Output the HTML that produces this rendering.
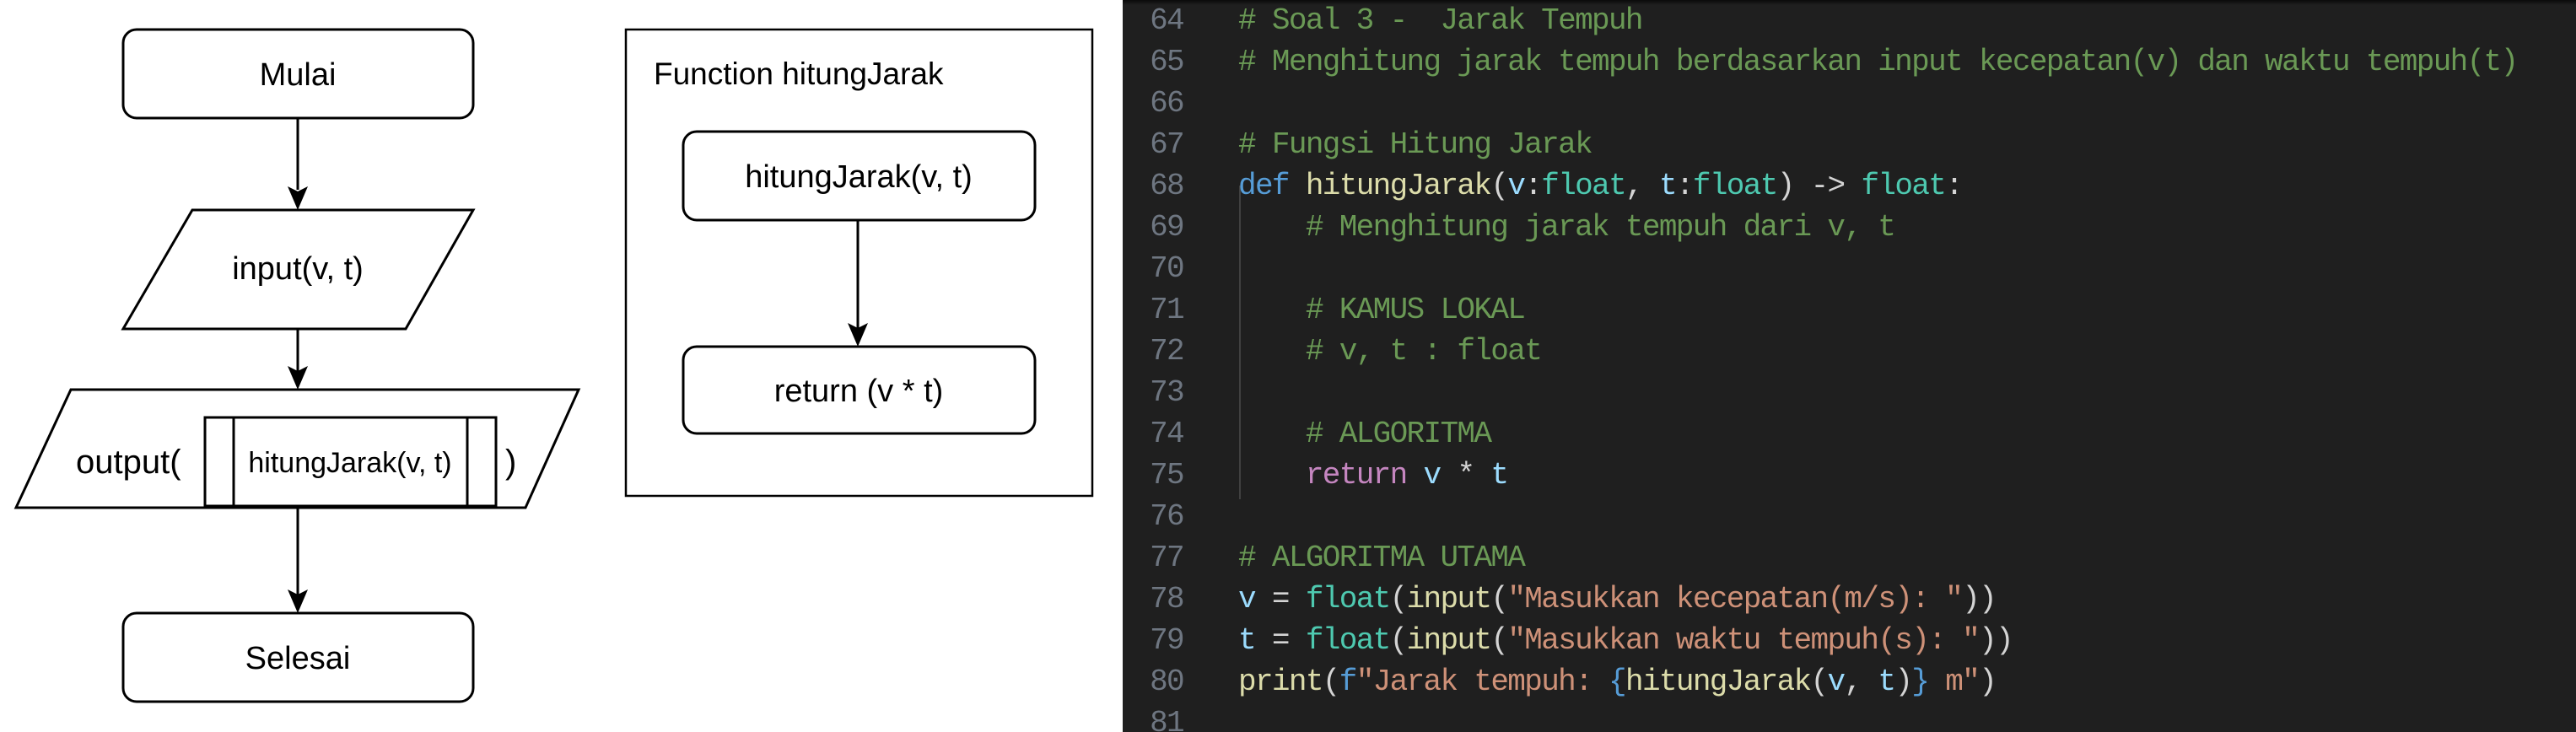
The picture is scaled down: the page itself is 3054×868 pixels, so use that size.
<!DOCTYPE html>
<html><head><meta charset="utf-8"><style>
html,body{margin:0;padding:0;width:3054px;height:868px;overflow:hidden;background:#fff}
#ed{position:absolute;left:1331px;top:0;width:1723px;height:868px;background:#1f1f1f;overflow:hidden}
#shadow{position:absolute;left:0;top:0;width:100%;height:6px;background:linear-gradient(#0a0a0a,#1f1f1f)}
.ln{position:absolute;left:0;width:72px;text-align:right;color:#6e7681;font-family:"Liberation Mono",monospace;font-size:36px;letter-spacing:-1.65px;height:49px;line-height:49px}
.cd{position:absolute;left:137px;white-space:pre;font-family:"Liberation Mono",monospace;font-size:36px;letter-spacing:-1.65px;height:49px;line-height:49px;color:#d4d4d4}
.c{color:#6a9955}.k{color:#569cd6}.f{color:#dcdcaa}.p{color:#9cdcfe}.t{color:#4ec9b0}.r{color:#c586c0}.s{color:#ce9178}
#guide{position:absolute;left:138px;top:220px;width:2px;height:372px;background:#404040}
</style></head><body>
<svg width="1331" height="868" style="position:absolute;left:0;top:0" font-family="Liberation Sans, Arial, sans-serif">
<g fill="none" stroke="#000" stroke-width="3">
<rect x="146" y="35" width="415" height="105" rx="16"/>
<polygon points="228,249 561,249 481,390 146,390"/>
<polygon points="84,462 686,462 623,602 19,602"/>
<rect x="243" y="495" width="345" height="105"/>
<line x1="277" y1="495" x2="277" y2="600"/>
<line x1="554" y1="495" x2="554" y2="600"/>
<rect x="146" y="727" width="415" height="105" rx="16"/>
<rect x="742" y="35" width="553" height="553" stroke-width="2.5"/>
<rect x="810" y="156" width="417" height="105" rx="16"/>
<rect x="810" y="411" width="417" height="103" rx="16"/>
<line x1="353" y1="140" x2="353" y2="225"/>
<line x1="353" y1="390" x2="353" y2="440"/>
<line x1="353" y1="602" x2="353" y2="705"/>
<line x1="1017" y1="261" x2="1017" y2="390"/>
</g>
<g fill="#000">
<polygon points="341,221 353,249 365,221 353,227"/>
<polygon points="341,434 353,462 365,434 353,440"/>
<polygon points="341,699 353,727 365,699 353,705"/>
<polygon points="1005,383 1017,411 1029,383 1017,389"/>
</g>
<g font-size="38" fill="#000" text-anchor="middle">
<text x="353" y="101">Mulai</text>
<text x="353" y="331">input(v, t)</text>
<text x="353" y="793">Selesai</text>
<text x="1018" y="222">hitungJarak(v, t)</text>
<text x="1018" y="476">return (v * t)</text>
</g>
<text x="775" y="100" font-size="37">Function hitungJarak</text>
<text x="90" y="561" font-size="40">output(</text>
<text x="599" y="561" font-size="40">)</text>
<text x="415" y="560" font-size="34" text-anchor="middle">hitungJarak(v, t)</text>
</svg>
<div id="ed"><div id="shadow"></div><div id="guide"></div>
<div class="ln" style="top:0px">64</div><div class="cd c" style="top:0px"># Soal 3 -  Jarak Tempuh</div>
<div class="ln" style="top:49px">65</div><div class="cd c" style="top:49px"># Menghitung jarak tempuh berdasarkan input kecepatan(v) dan waktu tempuh(t)</div>
<div class="ln" style="top:98px">66</div>
<div class="ln" style="top:147px">67</div><div class="cd c" style="top:147px"># Fungsi Hitung Jarak</div>
<div class="ln" style="top:196px">68</div><div class="cd" style="top:196px"><span class="k">def</span> <span class="f">hitungJarak</span>(<span class="p">v</span>:<span class="t">float</span>, <span class="p">t</span>:<span class="t">float</span>) -&gt; <span class="t">float</span>:</div>
<div class="ln" style="top:245px">69</div><div class="cd c" style="top:245px">    # Menghitung jarak tempuh dari v, t</div>
<div class="ln" style="top:294px">70</div>
<div class="ln" style="top:343px">71</div><div class="cd c" style="top:343px">    # KAMUS LOKAL</div>
<div class="ln" style="top:392px">72</div><div class="cd c" style="top:392px">    # v, t : float</div>
<div class="ln" style="top:441px">73</div>
<div class="ln" style="top:490px">74</div><div class="cd c" style="top:490px">    # ALGORITMA</div>
<div class="ln" style="top:539px">75</div><div class="cd" style="top:539px">    <span class="r">return</span> <span class="p">v</span> * <span class="p">t</span></div>
<div class="ln" style="top:588px">76</div>
<div class="ln" style="top:637px">77</div><div class="cd c" style="top:637px"># ALGORITMA UTAMA</div>
<div class="ln" style="top:686px">78</div><div class="cd" style="top:686px"><span class="p">v</span> = <span class="t">float</span>(<span class="f">input</span>(<span class="s">"Masukkan kecepatan(m/s): "</span>))</div>
<div class="ln" style="top:735px">79</div><div class="cd" style="top:735px"><span class="p">t</span> = <span class="t">float</span>(<span class="f">input</span>(<span class="s">"Masukkan waktu tempuh(s): "</span>))</div>
<div class="ln" style="top:784px">80</div><div class="cd" style="top:784px"><span class="f">print</span>(<span class="k">f</span><span class="s">"Jarak tempuh: </span><span class="k">{</span><span class="f">hitungJarak</span>(<span class="p">v</span>, <span class="p">t</span>)<span class="k">}</span><span class="s"> m"</span>)</div>
<div class="ln" style="top:833px">81</div>
</div>
</body></html>
